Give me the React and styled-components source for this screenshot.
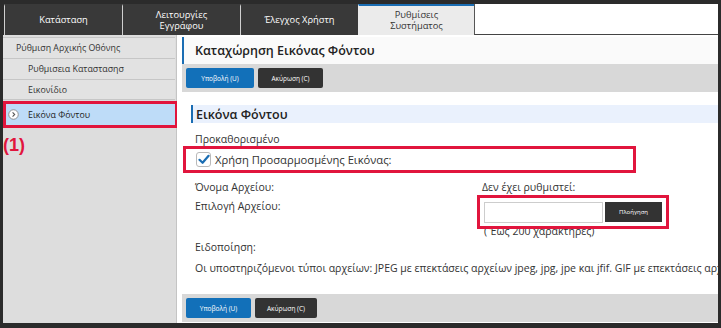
import React from "react";
import styled, { createGlobalStyle } from "styled-components";

const Global = createGlobalStyle`
  html, body { margin: 0; padding: 0; background: #2b2b2b; }
  body { font-family: "Open Sans", "Noto Sans", sans-serif; }
  * { box-sizing: border-box; }
`;

const RED = "#e1153d";
const BLUE = "#1a6db3";

const Frame = styled.div`
  width: 721px;
  height: 328px;
  background: #2b2b2b;
  padding: 0 3px 5px 3px;
  display: flex;
  flex-direction: column;
  overflow: hidden;
`;

const TabBar = styled.div`
  height: 35px;
  display: flex;
  padding-top: 4px;
  padding-left: 1px;
  flex-shrink: 0;
`;

const Tab = styled.div`
  width: ${(p) => p.$w}px;
  border-left: 1px solid ${(p) => (p.$active ? "#ebebeb" : "#cfcfcf")};
  background: ${(p) => (p.$active ? "#ebebeb" : "#393939")};
  border-top: 2px solid ${(p) => (p.$active ? BLUE : "#393939")};
  color: ${(p) => (p.$active ? "#333" : "#fff")};
  font-size: 9.3px;
  line-height: 11px;
  text-align: center;
  display: flex;
  align-items: center;
  justify-content: center;
  padding-bottom: 2px;
`;

const TabFiller = styled.div`
  flex: 1;
  background: #fff;
  border-left: 1px solid #555;
  border-bottom: 1px solid #444;
`;

const Body = styled.div`
  flex: 1;
  display: flex;
  min-height: 0;
`;

const Sidebar = styled.div`
  width: 174px;
  background: #dddddd;
  border-right: 1px solid #c4c4c4;
  padding-top: 2px;
  display: flex;
  flex-direction: column;
  flex-shrink: 0;
`;

const NavItem = styled.div`
  height: 21px;
  width: 172px;
  background: #e2e2e2;
  border-top: 1px solid #c6c6c6;
  border-bottom: ${(p) => (p.$last ? "1px solid #c6c6c6" : "none")};
  padding-left: ${(p) => (p.$sub ? 25 : 13)}px;
  font-size: 8.8px;
  color: #333;
  display: flex;
  align-items: center;
`;

const NavSelected = styled.div`
  height: 27px;
  width: 175px;
  margin-top: 1px;
  background: #bedcf8;
  border: 3px solid ${RED};
  padding-left: 2px;
  font-size: 8.8px;
  color: #222;
  display: flex;
  align-items: center;
  gap: 9px;
`;

const Callout = styled.div`
  color: ${RED};
  font-family: "Liberation Sans", Arial, sans-serif;
  font-weight: bold;
  font-size: 18px;
  margin-top: 7px;
`;

const Main = styled.div`
  flex: 1;
  background: #fff;
  padding-left: 5px;
  display: flex;
  flex-direction: column;
  overflow: hidden;
  min-width: 0;
`;

const PageHeader = styled.div`
  margin-top: 2px;
  height: 27px;
  background: #fafafa;
  border-left: 2px solid ${BLUE};
  padding-left: 11px;
  font-size: 12.5px;
  font-weight: 600;
  color: #222;
  display: flex;
  align-items: center;
`;

const Toolbar = styled.div`
  height: 28px;
  background: #d8d8d8;
  padding-left: 4px;
  display: flex;
  align-items: center;
  gap: 4px;
  flex-shrink: 0;
  margin-top: ${(p) => (p.$bottom ? "auto" : "0")};
  margin-bottom: ${(p) => (p.$bottom ? "1px" : "0")};
`;

const Btn = styled.div`
  width: ${(p) => p.$w}px;
  height: 20px;
  border-radius: 2px;
  background: ${(p) => (p.$primary ? "#1270b9" : "#333")};
  color: #fff;
  font-size: 6.5px;
  display: flex;
  align-items: center;
  justify-content: center;
`;

const SectionHeader = styled.div`
  margin-top: 13px;
  margin-left: 9px;
  height: 18px;
  background: #eaf1fd;
  border-left: 2px solid ${BLUE};
  padding-left: 3px;
  font-size: 12.5px;
  font-weight: 600;
  color: #222;
  display: flex;
  align-items: center;
`;

const Text = styled.div`
  font-size: 10.5px;
  line-height: 12px;
  color: #333;
  padding-left: 13px;
  margin-top: ${(p) => p.$mt || 0}px;
  white-space: nowrap;
`;

const CheckRow = styled.div`
  margin-top: 1px;
  margin-left: 1px;
  width: 453px;
  height: 27px;
  border: 3px solid ${RED};
  padding-left: 10px;
  display: flex;
  align-items: center;
  gap: 4px;
  font-size: 11.2px;
  color: #333;
`;

const CheckBox = styled.div`
  width: 15px;
  height: 15px;
  border: 1px solid #b9b9b9;
  border-radius: 3px;
  background: #fff;
  display: flex;
  align-items: center;
  justify-content: center;
`;

const FieldGrid = styled.div`
  margin-top: 8px;
  display: grid;
  grid-template-columns: 300px auto;
  row-gap: 2px;
  font-size: 10.5px;
  line-height: 12px;
  color: #333;
`;

const Label = styled.div`
  padding-left: 13px;
  padding-top: ${(p) => p.$pt || 0}px;
  white-space: nowrap;
`;

const Value = styled.div`
  white-space: nowrap;
`;

const PickerBox = styled.div`
  position: relative;
  z-index: 1;
  margin-left: -5px;
  width: 192px;
  height: 34px;
  border: 3px solid ${RED};
  background: #fff;
  padding-left: 4px;
  display: flex;
  align-items: center;
  gap: 2px;
`;

const FileInput = styled.div`
  width: 119px;
  height: 21px;
  border: 1px solid #cdcdcd;
  background: #fff;
`;

const BrowseBtn = styled.div`
  width: 57px;
  height: 20px;
  background: #333;
  color: #fff;
  font-size: 6px;
  display: flex;
  align-items: center;
  justify-content: center;
`;

const Hint = styled.div`
  grid-column: 2;
  margin-top: -6px;
  padding-left: 2px;
  white-space: nowrap;
`;

const CircleArrow = () => (
  <svg width="11" height="11" viewBox="0 0 12 12">
    <circle cx="6" cy="6" r="5.2" fill="#fff" stroke="#8a8a8a" strokeWidth="1" />
    <path d="M5 3.6 L7.3 6 L5 8.4" fill="none" stroke="#555" strokeWidth="1.2" />
  </svg>
);

const Check = () => (
  <svg width="12" height="11" viewBox="0 0 12 11">
    <path d="M1.5 5.8 L4.6 8.8 L10.6 1.8" fill="none" stroke={BLUE} strokeWidth="2.2" strokeLinecap="round" strokeLinejoin="round" />
  </svg>
);

export default function App() {
  return (
    <>
      <Global />
      <Frame>
        <TabBar>
          <Tab $w={118}>Κατάσταση</Tab>
          <Tab $w={118}>Λειτουργίες<br />Εγγράφου</Tab>
          <Tab $w={118}>Έλεγχος Χρήστη</Tab>
          <Tab $w={116} $active>Ρυθμίσεις<br />Συστήματος</Tab>
          <TabFiller />
        </TabBar>
        <Body>
          <Sidebar>
            <NavItem>Ρύθμιση Αρχικής Οθόνης</NavItem>
            <NavItem $sub>Ρυθμισεια Καταστασησ</NavItem>
            <NavItem $sub $last>Εικονίδιο</NavItem>
            <NavSelected>
              <CircleArrow />
              Εικόνα Φόντου
            </NavSelected>
            <Callout>(1)</Callout>
          </Sidebar>
          <Main>
            <PageHeader>Καταχώρηση Εικόνας Φόντου</PageHeader>
            <Toolbar>
              <Btn $primary $w={68}>Υποβολή (U)</Btn>
              <Btn $w={65}>Ακύρωση (C)</Btn>
            </Toolbar>
            <SectionHeader>Εικόνα Φόντου</SectionHeader>
            <Text $mt={10}>Προκαθορισμένο</Text>
            <CheckRow>
              <CheckBox><Check /></CheckBox>
              Χρήση Προσαρμοσμένης Εικόνας:
            </CheckRow>
            <FieldGrid>
              <Label>Όνομα Αρχείου:</Label>
              <Value>Δεν έχει ρυθμιστεί:</Value>
              <Label $pt={5}>Επιλογή Αρχείου:</Label>
              <PickerBox>
                <FileInput />
                <BrowseBtn>Πλοήγηση</BrowseBtn>
              </PickerBox>
              <Hint>( Έως 200 χαρακτήρες)</Hint>
            </FieldGrid>
            <Text $mt={4}>Ειδοποίηση:</Text>
            <Text $mt={9}>Οι υποστηριζόμενοι τύποι αρχείων: JPEG με επεκτάσεις αρχείων jpeg, jpg, jpe και jfif. GIF με επεκτάσεις αρχείων gif. PNG με επεκτάσεις αρχείων png.</Text>
            <Toolbar $bottom>
              <Btn $primary $w={65}>Υποβολή (U)</Btn>
              <Btn $w={62}>Ακύρωση (C)</Btn>
            </Toolbar>
          </Main>
        </Body>
      </Frame>
    </>
  );
}
